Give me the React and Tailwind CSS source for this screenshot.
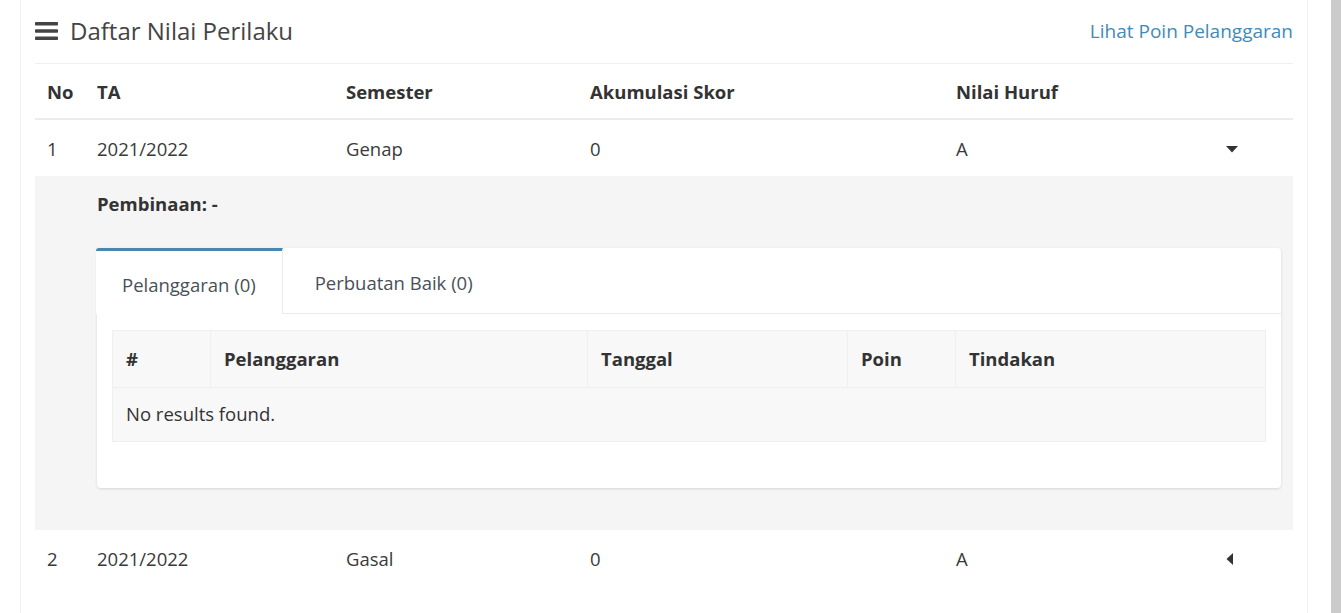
import React from 'react';

const rows = [
  { no: 1, ta: '2021/2022', semester: 'Genap', skor: 0, huruf: 'A', open: true },
  { no: 2, ta: '2021/2022', semester: 'Gasal', skor: 0, huruf: 'A', open: false },
];

function Bars() {
  return (
    <svg width="23" height="18" viewBox="0 0 23 18" className="shrink-0">
      <rect x="0" y="0" width="23" height="3.6" rx="0.8" fill="#444" />
      <rect x="0" y="7.2" width="23" height="3.6" rx="0.8" fill="#444" />
      <rect x="0" y="14.4" width="23" height="3.6" rx="0.8" fill="#444" />
    </svg>
  );
}

function CaretDown() {
  return (
    <svg width="12" height="7" viewBox="0 0 12 7">
      <polygon points="0,0 12,0 6,6.5" fill="#333" />
    </svg>
  );
}

function CaretLeft() {
  return (
    <svg width="7" height="12" viewBox="0 0 7 12">
      <polygon points="7,0 7,12 0.5,6" fill="#333" />
    </svg>
  );
}

function Detail() {
  return (
    <div className="bg-[#f5f5f5] pl-[62px] pr-[12px] pt-[14px] pb-[42px]">
      <div className="font-bold text-[#333] leading-[28px]">Pembinaan: -</div>

      <div className="mt-[30px] bg-white rounded-[4px] shadow-[0_1px_3px_rgba(0,0,0,0.13)]">
        <div className="flex border-b border-[#e9ecef]">
          <div className="h-[66px] -mb-px -ml-px flex items-center pl-[26px] pr-[26px] pt-[4px] border-t-[3px] border-[#4a87b0] border-r border-r-[#e9ecef] bg-white text-[#495057] rounded-tl-[3px]">
            Pelanggaran (0)
          </div>
          <div className="h-[65px] flex items-center pl-[32px] pr-[25px] pt-[4px] text-[#495057]">
            Perbuatan Baik (0)
          </div>
        </div>

        <div className="px-[15px] pt-[16px] pb-[46px]">
          <div className="border border-[#efefef] bg-[#f8f8f8]">
            <div className="grid grid-cols-[97px_377px_260px_108px_1fr] h-[56px] font-bold text-[#333]">
              <div className="flex items-center pl-[13px]">#</div>
              <div className="flex items-center pl-[13px] border-l border-[#efefef]">Pelanggaran</div>
              <div className="flex items-center pl-[13px] border-l border-[#efefef]">Tanggal</div>
              <div className="flex items-center pl-[13px] border-l border-[#efefef]">Poin</div>
              <div className="flex items-center pl-[13px] border-l border-[#efefef]">Tindakan</div>
            </div>
            <div className="h-[54px] flex items-center pl-[13px] pb-[2px] border-t border-[#efefef] text-[#333]">
              No results found.
            </div>
          </div>
        </div>
      </div>
    </div>
  );
}

export default function App() {
  return (
    <div className="flex min-h-[613px] bg-white font-['Open_Sans',sans-serif] text-[18.5px] text-[#333]">
      <div className="w-[20px] shrink-0" />
      <div className="w-[1288px] shrink-0 border-x border-[#f1f1f1] px-[14px]">
        <div className="h-[64px] flex items-center justify-between border-b border-[#f0f0f0]">
          <div className="flex items-center gap-[12px] pb-[1px]">
            <Bars />
            <h3 className="text-[24px] text-[#444] leading-none">Daftar Nilai Perilaku</h3>
          </div>
          <a href="#" className="text-[#3f8bbb] text-[19px]">Lihat Poin Pelanggaran</a>
        </div>

        <div className="grid grid-cols-[50px_249px_244px_366px_256px_1fr] h-[56px] pt-[1px] items-center font-bold border-b-2 border-[#ececec]">
          <div className="pl-[12px]">No</div>
          <div className="pl-[12px]">TA</div>
          <div className="pl-[12px]">Semester</div>
          <div className="pl-[12px]">Akumulasi Skor</div>
          <div className="pl-[12px]">Nilai Huruf</div>
          <div />
        </div>

        {rows.map((r) => (
          <div key={r.no}>
            <div className="grid grid-cols-[50px_249px_244px_366px_256px_1fr] h-[56px] pt-[2px] items-center text-[#3a3a3a]">
              <div className="pl-[12px]">{r.no}</div>
              <div className="pl-[12px]">{r.ta}</div>
              <div className="pl-[12px]">{r.semester}</div>
              <div className="pl-[12px]">{r.skor}</div>
              <div className="pl-[12px]">{r.huruf}</div>
              <div className="pl-[26px] flex items-center">
                {r.open ? <CaretDown /> : <CaretLeft />}
              </div>
            </div>
            {r.open && <Detail />}
          </div>
        ))}
      </div>
      <div className="w-[23px] shrink-0" />
      <div className="w-[10px] shrink-0 bg-[#cbcbcb]" />
    </div>
  );
}
